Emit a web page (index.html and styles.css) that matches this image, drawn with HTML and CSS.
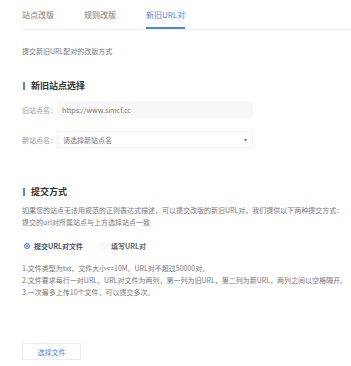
FILE: index.html
```
<!DOCTYPE html>
<html lang="zh-CN">
<head>
    <meta charset="UTF-8">
    <title>新旧URL对</title>
    <link rel="stylesheet" href="styles.css">
</head>
<body>

    <!-- Tabs -->
    <nav class="tabs">
        <a href="#" class="tab">站点改版</a>
        <a href="#" class="tab">规则改版</a>
        <a href="#" class="tab active">新旧URL对</a>
    </nav>

    <p class="intro">提交新旧URL配对的改版方式</p>

    <!-- Site select -->
    <h3 class="section-title">新旧站点选择</h3>
    <div class="form-row">
        <label>旧站点名：</label>
        <div class="field field-readonly">https://www.simcf.cc</div>
    </div>
    <div class="form-row">
        <label>新站点名：</label>
        <div class="field field-select">
            <span>请选择新站点名</span>
            <span class="arrow">▾</span>
        </div>
    </div>

    <!-- Submit mode -->
    <h3 class="section-title section-gap">提交方式</h3>
    <p class="desc">如果您的站点无法用规范的正则表达式描述，可以提交改版的新旧URL对，我们提供以下两种提交方式：<br>提交的url对所属站点与上方选择站点一致</p>

    <div class="radio-group">
        <span class="radio checked"><span class="radio-dot"></span>提交URL对文件</span>
        <span class="radio"><span class="radio-dot"></span>填写URL对</span>
    </div>

    <ul class="rules">
        <li>1.文件类型为txt，文件大小&lt;=10M。URL对不超过50000对。</li>
        <li>2.文件要求每行一对URL，URL对文件为两列，第一列为旧URL，第二列为新URL，两列之间以空格隔开。</li>
        <li>3.一次最多上传10个文件，可以提交多次。</li>
    </ul>

    <button class="upload-btn">选择文件</button>

</body>
</html>
```

FILE: styles.css
```
/* Reset */
* { margin: 0; padding: 0; box-sizing: border-box; }
body { font-family: "Noto Sans CJK SC", "Noto Sans", sans-serif; font-size: 7px; line-height: 12px; color: #777; background-color: #fff; padding: 9px 0 0 22px; }

/* Tabs */
.tabs { display: flex; gap: 30px; border-bottom: 1px solid #f0f0f0; }
.tab { font-size: 8px; line-height: 12px; color: #777; text-decoration: none; padding-bottom: 6px; border-bottom: 2px solid transparent; }
.tab.active { color: #4a85e8; border-bottom-color: #4a85e8; }

.intro { margin-top: 15px; }

/* Section titles */
.section-title { display: flex; align-items: center; gap: 6px; font-size: 9px; line-height: 12px; font-weight: 700; color: #333; margin-top: 23px; padding-left: 1px; }
.section-title::before { content: ""; width: 2px; height: 8px; background-color: #4a85e8; }
.section-gap { margin-top: 38px; }

/* Form rows */
.form-row { display: flex; align-items: center; margin-top: 9px; }
.form-row + .form-row { margin-top: 13px; }
.form-row label { width: 35px; color: #999; }
.field { display: flex; align-items: center; width: 196px; height: 17px; padding: 0 5px; color: #777; }
.field-readonly { background-color: #f7f7f7; }
.field-select { border: 1px solid #f0f0f0; justify-content: space-between; }
.arrow { font-size: 6px; color: #777; }

.desc { margin-top: 6px; white-space: nowrap; }

/* Radios */
.radio-group { display: flex; gap: 18px; margin-top: 12px; padding-left: 2px; }
.radio { display: flex; align-items: center; gap: 4px; font-weight: 700; color: #666; }
.radio-dot { width: 6px; height: 6px; border: 1px solid #ececec; border-radius: 50%; }
.radio.checked { color: #44526e; }
.radio.checked .radio-dot { border-color: #4a85e8; background-color: #4a85e8; box-shadow: inset 0 0 0 1px #fff; }

.rules { list-style: none; margin-top: 10px; white-space: nowrap; }

.upload-btn { display: block; margin-top: 45px; width: 59px; height: 17px; border: 1px solid #ededed; background-color: #fff; color: #4a85e8; font: inherit; cursor: pointer; }
```
